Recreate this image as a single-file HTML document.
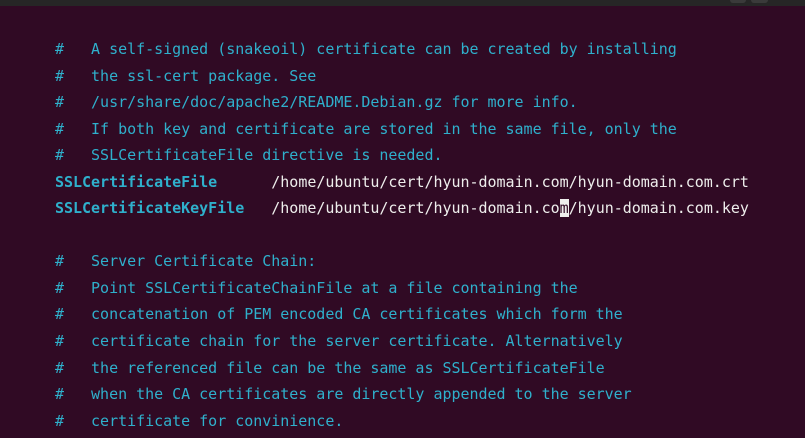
<!DOCTYPE html>
<html><head><style>
html,body{margin:0;padding:0;width:805px;height:438px;overflow:hidden;background:#300a24;}
.bar{position:absolute;left:0;top:0;width:805px;height:6px;background:#262626;}
.b1{position:absolute;top:0;left:730px;width:16px;height:3px;background:#3a3a3a;border-radius:0 0 4px 4px;}
.b2{position:absolute;top:0;left:751px;width:17px;height:3px;background:#3a3a3a;border-radius:0 0 4px 4px;}
pre{position:absolute;left:55px;top:36px;margin:0;font-family:"DejaVu Sans Mono","Liberation Mono",monospace;font-size:15px;line-height:26.55px;color:#2fb0cc;letter-spacing:-0.02px;}
.w{color:#eeeeec;}
.k{font-weight:bold;}
.cur{background:#eeeeec;color:#300a24;}
</style></head><body>
<div class="bar"></div><div class="b1"></div><div class="b2"></div>
<pre>#   A self-signed (snakeoil) certificate can be created by installing
#   the ssl-cert package. See
#   /usr/share/doc/apache2/README.Debian.gz for more info.
#   If both key and certificate are stored in the same file, only the
#   SSLCertificateFile directive is needed.
<span class="k">SSLCertificateFile</span>      <span class="w">/home/ubuntu/cert/hyun-domain.com/hyun-domain.com.crt</span>
<span class="k">SSLCertificateKeyFile</span>   <span class="w">/home/ubuntu/cert/hyun-domain.co<span class="cur">m</span>/hyun-domain.com.key</span>

#   Server Certificate Chain:
#   Point SSLCertificateChainFile at a file containing the
#   concatenation of PEM encoded CA certificates which form the
#   certificate chain for the server certificate. Alternatively
#   the referenced file can be the same as SSLCertificateFile
#   when the CA certificates are directly appended to the server
#   certificate for convinience.</pre>
</body></html>
